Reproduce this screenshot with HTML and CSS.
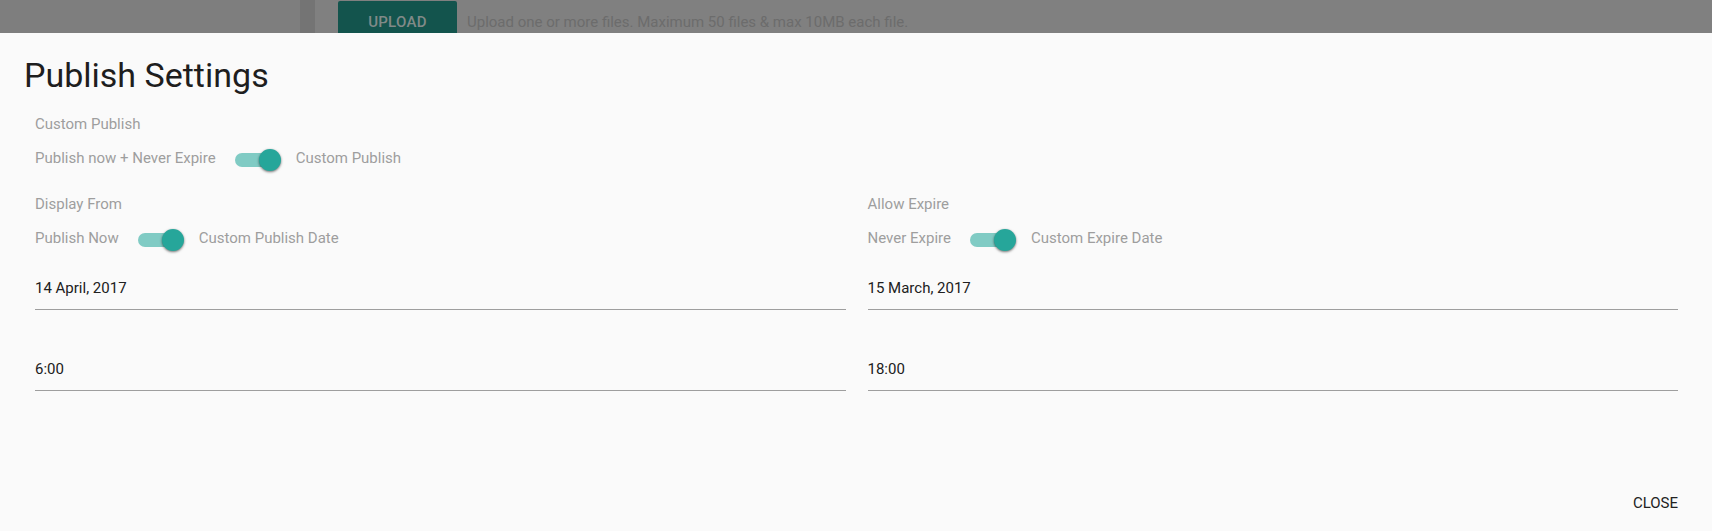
FILE: index.html
```html
<!DOCTYPE html>
<html lang="en">
<head>
<meta charset="utf-8">
<title>Publish Settings</title>
<link rel="stylesheet" href="styles.css">
</head>
<body>
<div class="page-strip">
  <div class="strip-left"></div>
  <div class="strip-bar"></div>
  <div class="strip-main">
    <div class="upload-btn">UPLOAD</div>
    <div class="upload-hint">Upload one or more files. Maximum 50 files &amp; max 10MB each file.</div>
  </div>
</div>
<div class="modal">
  <h1 class="modal-title">Publish Settings</h1>
  <div class="modal-body">
    <div class="label">Custom Publish</div>
    <div class="toggle-row">
      <span class="opt">Publish now + Never Expire</span>
      <span class="toggle"><span class="track"></span><span class="thumb"></span></span>
      <span class="opt">Custom Publish</span>
    </div>
    <div class="columns">
      <div class="col">
        <div class="label label-first">Display From</div>
        <div class="toggle-row">
          <span class="opt">Publish Now</span>
          <span class="toggle"><span class="track"></span><span class="thumb"></span></span>
          <span class="opt">Custom Publish Date</span>
        </div>
        <div class="field field-date">14 April, 2017</div>
        <div class="field field-time">6:00</div>
      </div>
      <div class="col">
        <div class="label label-first">Allow Expire</div>
        <div class="toggle-row">
          <span class="opt">Never Expire</span>
          <span class="toggle"><span class="track"></span><span class="thumb"></span></span>
          <span class="opt">Custom Expire Date</span>
        </div>
        <div class="field field-date">15 March, 2017</div>
        <div class="field field-time">18:00</div>
      </div>
    </div>
  </div>
  <div class="modal-actions">
    <button class="close-btn" type="button">CLOSE</button>
  </div>
</div>
</body>
</html>
```
FILE: styles.css
```css
* { box-sizing: border-box; }

html, body {
  margin: 0;
  padding: 0;
}

body {
  width: 1712px;
  height: 531px;
  overflow: hidden;
  background: #fafafa;
  font-family: Roboto, "Liberation Sans", sans-serif;
}

.page-strip {
  height: 33px;
  display: flex;
  overflow: hidden;
  background: #808080;
}

.strip-left {
  width: 300px;
  background: #7e7e7e;
}

.strip-bar {
  width: 15px;
  background: #747474;
}

.strip-main {
  display: flex;
  align-items: flex-start;
  gap: 10px;
  padding-left: 23px;
}

.upload-btn {
  margin-top: 1px;
  width: 119px;
  height: 43px;
  line-height: 43px;
  text-align: center;
  background: #13544d;
  color: #818a88;
  font-size: 15px;
  font-weight: 500;
  border-radius: 2px;
  letter-spacing: 0.3px;
}

.upload-hint {
  margin-top: 1px;
  line-height: 43px;
  font-size: 15px;
  color: #6c6c6c;
  white-space: nowrap;
}

.modal {
  height: 498px;
  display: flex;
  flex-direction: column;
  background: #fafafa;
  padding-bottom: 18px;
}

.modal-title {
  margin: 22px 0 0;
  padding-left: 24px;
  font-size: 34px;
  line-height: 40px;
  font-weight: 400;
  color: #1e1e1e;
}

.modal-body {
  padding: 0 34px 0 35px;
}

.label {
  margin-top: 19px;
  font-size: 15px;
  line-height: 20px;
  color: #9e9e9e;
}

.label-first {
  margin-top: 0;
}

.toggle-row {
  margin-top: 14px;
  display: flex;
  align-items: flex-start;
  height: 23px;
  font-size: 15px;
  line-height: 20px;
  color: #9e9e9e;
}

.toggle {
  display: flex;
  align-items: center;
  margin: 1px 15px 0 19px;
  height: 22px;
}

.track {
  width: 37px;
  height: 14px;
  border-radius: 7px;
  background: #80cbc4;
}

.thumb {
  width: 22px;
  height: 22px;
  margin-left: -13px;
  border-radius: 50%;
  background: #26a69a;
  box-shadow: 0 1px 3px rgba(0, 0, 0, 0.35), 0 1px 2px rgba(0, 0, 0, 0.25);
}

.columns {
  margin-top: 23px;
  display: grid;
  grid-template-columns: 1fr 1fr;
  column-gap: 22px;
}

.field {
  font-size: 15px;
  line-height: 20px;
  color: #202020;
  padding-bottom: 11px;
  border-bottom: 1px solid #9e9e9e;
}

.field-date {
  margin-top: 27px;
}

.field-time {
  margin-top: 49px;
}

.modal-actions {
  margin-top: auto;
  display: flex;
  justify-content: flex-end;
  padding-right: 34px;
}

.close-btn {
  border: 0;
  padding: 0;
  background: transparent;
  font-family: Roboto, "Liberation Sans", sans-serif;
  font-size: 15px;
  line-height: 20px;
  font-weight: 400;
  color: #222222;
  cursor: pointer;
}
```
